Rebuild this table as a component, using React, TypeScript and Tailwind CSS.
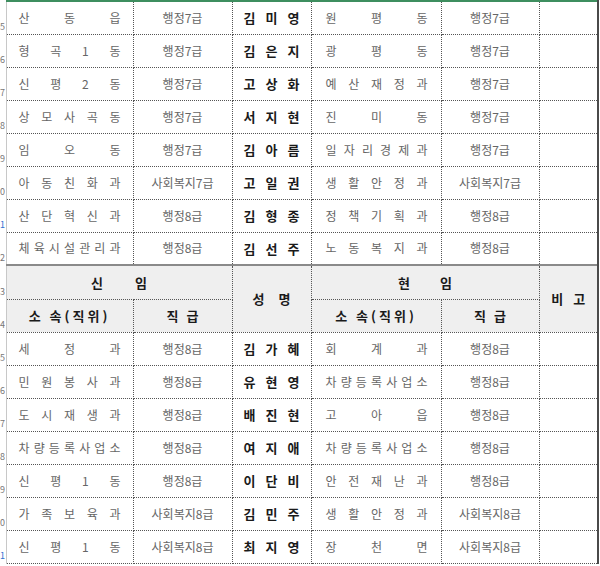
import React from "react";

type Row = [string, string, string, string, string];

const topRows: Row[] = [
  ["산동읍", "행정7급", "김미영", "원평동", "행정7급"],
  ["형곡1동", "행정7급", "김은지", "광평동", "행정7급"],
  ["신평2동", "행정7급", "고상화", "예산재정과", "행정7급"],
  ["상모사곡동", "행정7급", "서지현", "진미동", "행정7급"],
  ["임오동", "행정7급", "김아름", "일자리경제과", "행정7급"],
  ["아동친화과", "사회복지7급", "고일권", "생활안정과", "사회복지7급"],
  ["산단혁신과", "행정8급", "김형종", "정책기획과", "행정8급"],
  ["체육시설관리과", "행정8급", "김선주", "노동복지과", "행정8급"],
];

const bottomRows: Row[] = [
  ["세정과", "행정8급", "김가혜", "회계과", "행정8급"],
  ["민원봉사과", "행정8급", "유현영", "차량등록사업소", "행정8급"],
  ["도시재생과", "행정8급", "배진현", "고아읍", "행정8급"],
  ["차량등록사업소", "행정8급", "여지애", "차량등록사업소", "행정8급"],
  ["신평1동", "행정8급", "이단비", "안전재난과", "행정8급"],
  ["가족보육과", "사회복지8급", "김민주", "생활안정과", "사회복지8급"],
  ["신평1동", "사회복지8급", "최지영", "장천면", "사회복지8급"],
];

const cell = "p-0 border border-dotted border-[#555] align-middle";
const rightEdge = "border-r-2 border-r-[#4a4a4a] [border-right-style:solid]";

function Spread({ text, pl, pr }: { text: string; pl: string; pr: string }) {
  return (
    <div className={`flex justify-between ${pl} ${pr}`}>
      {Array.from(text).map((c, i) => (
        <span key={i}>{c}</span>
      ))}
    </div>
  );
}

function Name({ text }: { text: string }) {
  return (
    <div className="flex justify-center gap-[10px] font-bold text-[#1a1a1a] text-[13px]">
      {Array.from(text).map((c, i) => (
        <span key={i}>{c}</span>
      ))}
    </div>
  );
}

function Gutter({ n, blue }: { n: string; blue?: boolean }) {
  return (
    <td className="p-0 border-r border-r-[#c8c8c8] align-bottom">
      <div className="w-[5px] overflow-hidden flex justify-end pb-[3px]">
        <span className={`text-[9px] leading-none ${blue ? "text-[#2f6fd0]" : "text-[#777]"}`}>{n}</span>
      </div>
    </td>
  );
}

function DataRow({ r, n, blue, first }: { r: Row; n: string; blue?: boolean; first?: boolean }) {
  const t = first ? "border-t-2 border-t-[#3e8e5f] [border-top-style:solid]" : "";
  return (
    <tr className="h-[33px]">
      <Gutter n={n} blue={blue} />
      <td className={`${cell} ${t}`}>
        <Spread text={r[0]} pl="pl-[12px]" pr="pr-[12px]" />
      </td>
      <td className={`${cell} ${t} text-center`}>{r[1]}</td>
      <td className={`${cell} ${t}`}>
        <Name text={r[2]} />
      </td>
      <td className={`${cell} ${t}`}>
        <Spread text={r[3]} pl="pl-[14px]" pr="pr-[13px]" />
      </td>
      <td className={`${cell} ${t} text-center`}>{r[4]}</td>
      <td className={`${cell} ${t} ${rightEdge}`}></td>
    </tr>
  );
}

export default function App() {
  const hd =
    "p-0 border border-dotted border-[#555] bg-[#efefef] font-bold text-[#1a1a1a] text-[13px] text-center align-middle";
  const topLine = "border-t-2 border-t-[#8a8a8a] [border-top-style:solid]";
  return (
    <div
      className="w-[600px] h-[566px] bg-white overflow-hidden"
      style={{ fontFamily: '"Noto Sans CJK KR", "Noto Sans", sans-serif' }}
    >
      <table className="table-fixed border-collapse w-[598px] text-[12px] text-[#666] leading-none">
        <colgroup>
          <col className="w-[6px]" />
          <col className="w-[127px]" />
          <col className="w-[99px]" />
          <col className="w-[79px]" />
          <col className="w-[130px]" />
          <col className="w-[98px]" />
          <col className="w-[59px]" />
        </colgroup>
        <tbody>
          {topRows.map((r, i) => (
            <DataRow key={i} r={r} n={String((5 + i) % 10)} blue={i === 6} first={i === 0} />
          ))}
          <tr className="h-[34px]">
            <Gutter n="3" />
            <td colSpan={2} className={`${hd} ${topLine}`}>
              <span>신</span>
              <span className="ml-[32px]">임</span>
            </td>
            <td rowSpan={2} className={`${hd} ${topLine}`}>
              <span>성</span>
              <span className="ml-[14px]">명</span>
            </td>
            <td colSpan={2} className={`${hd} ${topLine}`}>
              <span>현</span>
              <span className="ml-[30px]">임</span>
            </td>
            <td rowSpan={2} className={`${hd} ${topLine} ${rightEdge}`}>
              <span>비</span>
              <span className="ml-[10px]">고</span>
            </td>
          </tr>
          <tr className="h-[33px]">
            <Gutter n="4" />
            <td className={hd}>
              <span className="tracking-[3px]">소 속(직위)</span>
            </td>
            <td className={hd}>
              <span>직</span>
              <span className="ml-[8px]">급</span>
            </td>
            <td className={hd}>
              <span className="tracking-[3px]">소 속(직위)</span>
            </td>
            <td className={hd}>
              <span>직</span>
              <span className="ml-[8px]">급</span>
            </td>
          </tr>
          {bottomRows.map((r, i) => (
            <DataRow key={i} r={r} n={String((5 + i) % 10)} blue={i === 6} />
          ))}
        </tbody>
      </table>
    </div>
  );
}
